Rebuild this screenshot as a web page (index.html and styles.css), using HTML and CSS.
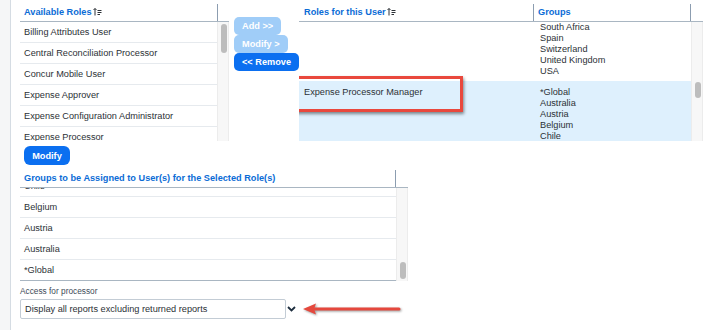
FILE: index.html
```html
<!DOCTYPE html>
<html lang="en">
<head>
  <meta charset="UTF-8" />
  <title>Assign Roles</title>
  <link rel="stylesheet" href="styles.css">
</head>
<body>
  <div class="page">
    <div class="top">
      <div class="panel avail">
        <div class="thead">
          <div class="th th-avail">Available Roles<svg class="sort" viewBox="0 0 9 9"><path d="M2 8.5V1.5M0.5 3L2 1.5L3.5 3M4.5 3.5H8.5M4.5 5.5H8.5M4.5 7.5H7" /></svg></div>
        </div>
        <div class="tbody">
          <div class="rows">
            <div class="row">Billing Attributes User</div>
            <div class="row">Central Reconciliation Processor</div>
            <div class="row">Concur Mobile User</div>
            <div class="row">Expense Approver</div>
            <div class="row">Expense Configuration Administrator</div>
            <div class="row">Expense Processor</div>
          </div>
          <div class="track track-avail"><div class="thumb thumb-avail"></div></div>
        </div>
      </div>

      <div class="actions">
        <button class="btn off">Add &gt;&gt;</button>
        <button class="btn off">Modify &gt;</button>
        <button class="btn">&lt;&lt; Remove</button>
      </div>

      <div class="panel user-roles">
        <div class="thead">
          <div class="th th-role">Roles for this User<svg class="sort" viewBox="0 0 9 9"><path d="M2 8.5V1.5M0.5 3L2 1.5L3.5 3M4.5 3.5H8.5M4.5 5.5H8.5M4.5 7.5H7" /></svg></div>
          <div class="th th-groups">Groups</div>
        </div>
        <div class="tbody">
          <div class="rows">
            <div class="urow first">
              <div class="cell-role"></div>
              <div class="cell-groups">South Africa<br>Spain<br>Switzerland<br>United Kingdom<br>USA</div>
            </div>
            <div class="urow selected">
              <div class="callout"></div>
              <div class="cell-role">Expense Processor Manager</div>
              <div class="cell-groups">*Global<br>Australia<br>Austria<br>Belgium<br>Chile</div>
            </div>
          </div>
          <div class="track track-roles"><div class="thumb thumb-roles"></div></div>
        </div>
      </div>
    </div>

    <div class="modify-row">
      <button class="btn btn-modify">Modify</button>
    </div>

    <div class="panel assign">
      <div class="thead thead-assign">
        <div class="th th-assign">Groups to be Assigned to User(s) for the Selected Role(s)</div>
      </div>
      <div class="tbody tbody-assign">
        <div class="rows rows-assign">
          <div class="row row-cut">Chile</div>
          <div class="row">Belgium</div>
          <div class="row">Austria</div>
          <div class="row">Australia</div>
          <div class="row last">*Global</div>
        </div>
        <div class="track track-assign"><div class="thumb thumb-assign"></div></div>
      </div>
    </div>

    <div class="field-label">Access for processor</div>
    <div class="select-row">
      <div class="select">Display all reports excluding returned reports</div>
      <svg class="chevron" viewBox="0 0 9 6"><path d="M1 1L4.5 4.5L8 1" /></svg>
      <svg class="arrow" viewBox="0 0 100 16"><path class="arrow-shaft" d="M10 8H97" /><path class="arrow-head" d="M1 8L14 2.5L12 8L14 13.5Z" /></svg>
    </div>
  </div>
</body>
</html>
```

FILE: styles.css
```css
* {
  box-sizing: border-box;
}
body {
  margin: 0;
  background: #f5f6f7;
  font-family: "Liberation Sans", Arial, sans-serif;
  font-size: 9.2px;
  color: #2c3136;
}
.page {
  margin-left: 10px;
  min-height: 330px;
  padding-left: 9px;
  background: #fff;
  border-left: 1px solid #d5dce3;
}

/* top area */
.top {
  display: flex;
  height: 141px;
}
.panel {
  display: flex;
  flex-direction: column;
}
.avail {
  width: 209px;
}
.user-roles {
  width: 404px;
}
.thead {
  display: flex;
  height: 22px;
  border-bottom: 1px solid #a9b6c2;
}
.th {
  margin-top: 4px;
  height: 17px;
  line-height: 17px;
  padding-left: 4px;
  font-weight: bold;
  color: #0b6cd6;
  border-right: 1px solid #8c9db0;
  white-space: nowrap;
}
.th-avail {
  width: 198px;
}
.th-role {
  width: 235px;
  padding-left: 5px;
}
.th-groups {
  width: 157px;
}
.sort {
  width: 9px;
  height: 9px;
  margin-left: 1px;
  vertical-align: -1px;
}
.sort path {
  fill: none;
  stroke: #2c3136;
  stroke-width: 1;
}
.tbody {
  display: flex;
  flex: 1;
  overflow: hidden;
}
.rows {
  flex: 1;
  overflow: hidden;
}
.row {
  height: 21px;
  line-height: 20px;
  padding-left: 4px;
  border-bottom: 1px solid #e6eaee;
  white-space: nowrap;
}
.track {
  width: 12px;
  background: #f7f7f7;
  border-left: 1px solid #ececec;
  border-right: 1px solid #ececec;
}
.thumb {
  width: 6px;
  margin-left: 3px;
  border-radius: 3px;
  background: #bdbdbd;
}
.track-avail {
  padding-top: 2px;
}
.thumb-avail {
  height: 29px;
}
.track-roles {
  padding-top: 60px;
}
.thumb-roles {
  height: 16px;
}

/* roles of the user */
.urow {
  display: flex;
  line-height: 11px;
}
.urow.first {
  height: 59px;
}
.urow.selected {
  position: relative;
  height: 80px;
  padding-top: 6px;
  background: #def0fd;
}
.cell-role {
  width: 235px;
  padding-left: 5px;
}
.cell-groups {
  padding-left: 6px;
}
.callout {
  position: absolute;
  left: -15px;
  top: -5px;
  width: 179px;
  height: 36px;
  border: 3px solid #e9483d;
  box-shadow: 1px 2px 3px rgba(0, 0, 0, 0.45);
}

/* buttons */
.actions {
  width: 65px;
  margin-left: 5px;
  padding-top: 17px;
  display: flex;
  flex-direction: column;
  align-items: flex-start;
}
.btn {
  height: 18px;
  padding: 0 8px;
  font-family: "Liberation Sans", Arial, sans-serif;
  font-size: 9.2px;
  font-weight: bold;
  color: #fff;
  background: #0b6ff0;
  border: none;
  border-radius: 5px;
  white-space: nowrap;
}
.btn.off {
  background: #a0cdf8;
}
.modify-row {
  padding: 5px 0 0 4px;
}
.btn-modify {
  height: 19px;
  width: 46px;
  padding: 0;
  border-radius: 6px;
}

/* groups to assign */
.assign {
  width: 388px;
  margin-top: 5px;
}
.thead-assign {
  height: 18px;
}
.th-assign {
  margin-top: 0;
  width: 376px;
}
.tbody-assign {
  height: 93px;
  flex: none;
}
.rows-assign {
  border-bottom: 1px solid #a9b6c2;
}
.row-cut {
  margin-top: -12px;
}
.row.last {
  border-bottom: none;
}
.track-assign {
  padding-top: 74px;
}
.thumb-assign {
  height: 17px;
}

/* select */
.field-label {
  margin-top: 5px;
  line-height: 10px;
  font-size: 8.3px;
  color: #3d4a58;
}
.select-row {
  display: flex;
  align-items: center;
  margin-top: 3px;
}
.select {
  width: 266px;
  height: 20px;
  line-height: 18px;
  padding-left: 4px;
  border: 1px solid #c3ccd5;
  border-radius: 2px;
}
.chevron {
  width: 9px;
  height: 6px;
  margin-left: 1px;
}
.chevron path {
  fill: none;
  stroke: #1d2d3e;
  stroke-width: 1.8;
}
.arrow {
  width: 100px;
  height: 16px;
  margin-left: 6px;
  filter: drop-shadow(1px 1px 1px rgba(0, 0, 0, 0.4));
}
.arrow-shaft {
  stroke: #e5483d;
  stroke-width: 3;
  stroke-linecap: round;
}
.arrow-head {
  fill: #e5483d;
}
```
